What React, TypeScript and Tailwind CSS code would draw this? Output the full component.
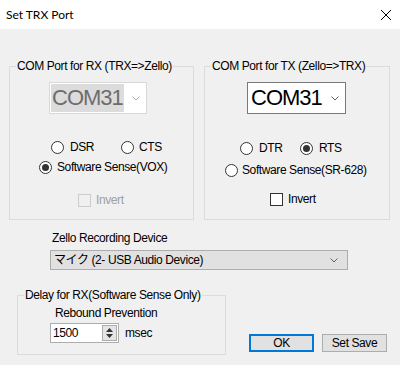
import React from "react";

const ui = { fontFamily: '"Liberation Sans", "Noto Sans CJK JP", sans-serif' };

function Chevron({ color = "#606060" }: { color?: string }) {
    return (
        <svg width="8" height="5" viewBox="0 0 8 5" className="shrink-0">
            <polyline points="0.5,0.5 4,4 7.5,0.5" fill="none" stroke={color} strokeWidth="1" />
        </svg>
    );
}

function Radio({ checked = false }: { checked?: boolean }) {
    return (
        <span className="w-[13px] h-[13px] rounded-full border border-[#333] bg-white flex items-center justify-center shrink-0">
            {checked && <span className="w-[7px] h-[7px] rounded-full bg-[#333]" />}
        </span>
    );
}

function Check({ disabled = false }: { disabled?: boolean }) {
    return (
        <span
            className={`w-[13px] h-[13px] border shrink-0 ${disabled ? "border-[#cccccc] bg-[#f0f0f0]" : "border-[#333] bg-white"}`}
        />
    );
}

function Legend({ children }: { children: React.ReactNode }) {
    return <legend className="ml-[6px] px-[1px] text-[12px] leading-[14px] tracking-[-0.4px] text-black">{children}</legend>;
}

export default function App() {
    return (
        <div className="w-[400px] h-[365px] bg-[#f0f0f0] overflow-hidden text-black" style={ui}>
            <div className="h-[29px] bg-white flex items-center justify-between pl-[6px] pr-[9px]">
                <span className="text-[12px]" style={{ fontFamily: "Lato, sans-serif" }}>Set TRX Port</span>
                <svg width="10" height="10" viewBox="0 0 10 10">
                    <path d="M0 0 L10 10 M10 0 L0 10" stroke="#000" strokeWidth="1" />
                </svg>
            </div>

            <div className="flex flex-col text-[12px] tracking-[-0.4px]">
                <div className="flex mt-[30px]">
                    <fieldset className="ml-[9px] w-[185px] h-[161px] border border-[#dcdcdc]">
                        <Legend>COM Port for RX (TRX=&gt;Zello)</Legend>
                        <div className="ml-[39px] mt-[9px] w-[98px] h-[32px] border border-[#d9d9d9] bg-white flex items-center pl-[1px] pr-[6px] justify-between">
                            <span className="bg-[#dcdcdc] text-[#6d6d6d] text-[22px] leading-[28px] tracking-[-1px] px-[1px]">COM31</span>
                            <Chevron color="#b0b0b0" />
                        </div>
                        <div className="flex items-center h-[16px] mt-[25px] ml-[41px]">
                            <div className="w-[70px] flex items-center gap-[6px]"><Radio /><span>DSR</span></div>
                            <div className="flex items-center gap-[5px]"><Radio /><span>CTS</span></div>
                        </div>
                        <div className="flex items-center gap-[5px] h-[16px] mt-[4px] ml-[29px]">
                            <Radio checked /><span>Software Sense(VOX)</span>
                        </div>
                        <div className="flex items-center gap-[5px] h-[16px] mt-[17px] ml-[68px] text-[#a0a0a0]">
                            <Check disabled /><span>Invert</span>
                        </div>
                    </fieldset>

                    <fieldset className="ml-[10px] w-[186px] h-[161px] border border-[#dcdcdc]">
                        <Legend>COM Port for TX (Zello=&gt;TRX)</Legend>
                        <div className="ml-[42px] mt-[9px] w-[99px] h-[32px] border border-[#7a7a7a] bg-white flex items-center pl-[2px] pr-[6px] justify-between">
                            <span className="text-[22px] leading-[28px] tracking-[-1px] px-[1px]">COM31</span>
                            <Chevron />
                        </div>
                        <div className="flex items-center h-[16px] mt-[26px] ml-[35px]">
                            <div className="w-[60px] flex items-center gap-[6px]"><Radio /><span>DTR</span></div>
                            <div className="flex items-center gap-[6px]"><Radio checked /><span>RTS</span></div>
                        </div>
                        <div className="flex items-center gap-[4px] h-[16px] mt-[6px] ml-[20px]">
                            <Radio /><span>Software Sense(SR-628)</span>
                        </div>
                        <div className="flex items-center gap-[5px] h-[16px] mt-[13px] ml-[65px]">
                            <Check /><span>Invert</span>
                        </div>
                    </fieldset>
                </div>

                <div className="ml-[52px] mt-[11px] leading-[14px]">Zello Recording Device</div>
                <div className="ml-[50px] mt-[5px] w-[298px] h-[20px] border border-[#adadad] bg-[#e1e1e1] flex items-center justify-between pl-[3px] pr-[9px]">
                    <span>マイク (2- USB Audio Device)</span>
                    <Chevron />
                </div>

                <div className="flex mt-[18px]">
                    <fieldset className="ml-[17px] w-[209px] h-[67px] border border-[#dcdcdc]">
                        <Legend>Delay for RX(Software Sense Only)</Legend>
                        <div className="ml-[37px] mt-[4px] leading-[14px]">Rebound Prevention</div>
                        <div className="flex items-center mt-[3px] ml-[32px]">
                            <div className="w-[69px] h-[20px] border border-[#adadad] bg-white flex items-center justify-between pl-[2px] pr-[1px]">
                                <span>1500</span>
                                <div className="w-[15px] h-[16px] border border-[#adadad] bg-[#e5e5e5] flex flex-col items-center justify-center gap-[2px]">
                                    <svg width="7" height="4" viewBox="0 0 7 4"><polygon points="3.5,0 7,4 0,4" fill="#333" /></svg>
                                    <svg width="7" height="4" viewBox="0 0 7 4"><polygon points="0,0 7,0 3.5,4" fill="#333" /></svg>
                                </div>
                            </div>
                            <span className="ml-[6px]">msec</span>
                        </div>
                    </fieldset>
                    <button className="ml-[23px] mt-[46px] w-[65px] h-[18px] border-2 border-[#0078d7] bg-[#e1e1e1] text-[12px] leading-none">OK</button>
                    <button className="ml-[8px] mt-[46px] w-[65px] h-[18px] border border-[#adadad] bg-[#e1e1e1] text-[12px] leading-none">Set Save</button>
                </div>
            </div>
        </div>
    );
}
